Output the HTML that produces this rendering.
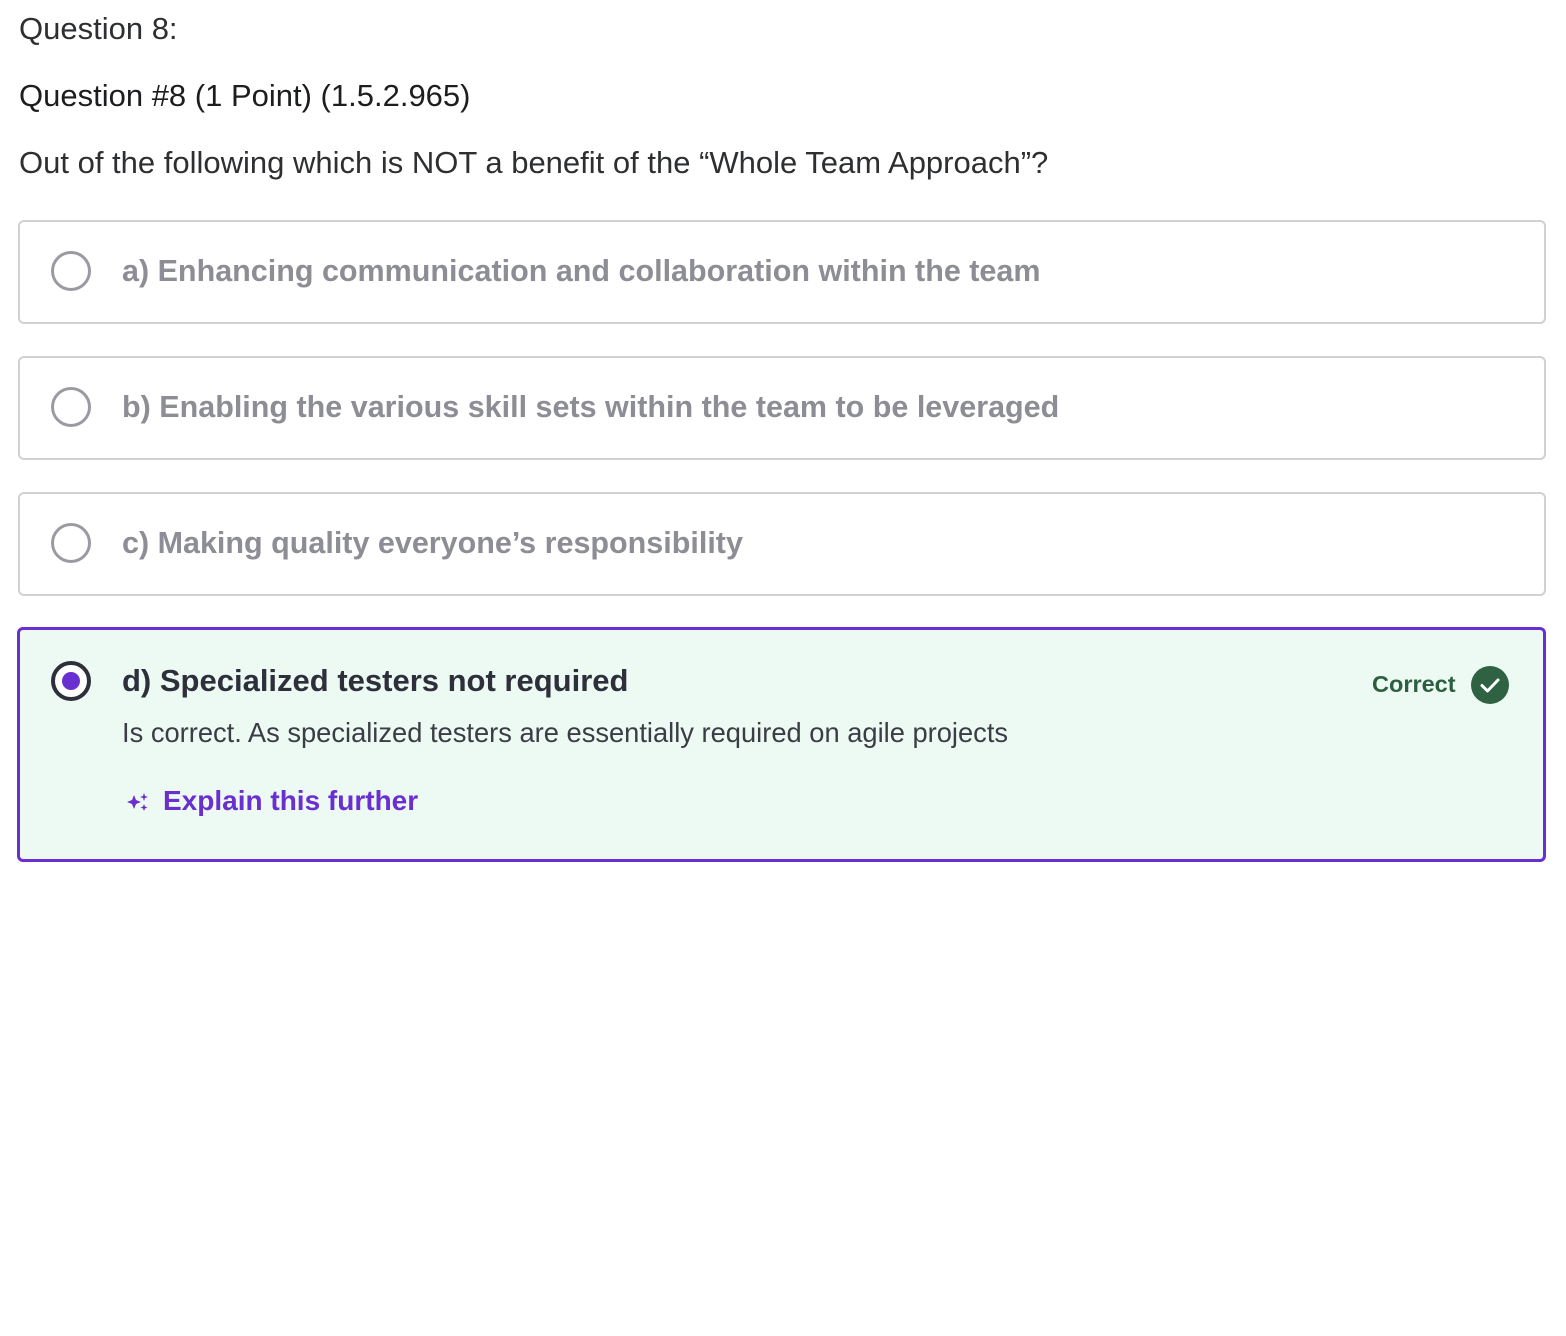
<!DOCTYPE html>
<html><head><meta charset="utf-8"><style>
body{margin:0;background:#fff;font-family:"Liberation Sans",sans-serif;color:#2d2f31;width:1566px;height:1336px;position:relative;overflow:hidden}
.t{position:absolute;left:19px;white-space:nowrap}
.box{position:absolute;left:18px;width:1524px;border:2px solid #d1d1d5;border-radius:6px;background:#fff}
.opt{height:100px}
.radio{position:absolute;left:31px;border:3px solid #9a9aa2;border-radius:50%;box-sizing:border-box;width:40px;height:40px}
.lbl{position:absolute;left:102px;font-size:30.5px;font-weight:bold;color:#8d8d95;white-space:nowrap}
</style></head><body>
<div class="t" style="top:11px;font-size:31px;">Question 8:</div>
<div class="t" style="top:78px;font-size:31px;color:#1c1d1f">Question #8 (1 Point) (1.5.2.965)</div>
<div class="t" style="top:145px;font-size:31px;">Out of the following which is NOT a benefit of the “Whole Team Approach”?</div>

<div class="box opt" style="top:220px"><div class="radio" style="top:29px"></div><div class="lbl" style="top:32px">a) Enhancing communication and collaboration within the team</div></div>
<div class="box opt" style="top:356px"><div class="radio" style="top:29px"></div><div class="lbl" style="top:32px">b) Enabling the various skill sets within the team to be leveraged</div></div>
<div class="box opt" style="top:492px"><div class="radio" style="top:29px"></div><div class="lbl" style="top:32px">c) Making quality everyone’s responsibility</div></div>

<div class="box" style="top:627px;height:229px;border:3px solid #6a2fd0;background:#edf9f3;width:1523px;left:17px">
 <div style="position:absolute;left:31px;top:31px;width:40px;height:40px;border:4px solid #2d2f3a;border-radius:50%;box-sizing:border-box;background:#fff"><div style="position:absolute;left:7px;top:7px;width:18px;height:18px;border-radius:50%;background:#6a2fd0"></div></div>
 <div style="position:absolute;left:102px;top:33px;font-size:31px;font-weight:bold;color:#2d2f3a;white-space:nowrap">d) Specialized testers not required</div>
 <div style="position:absolute;left:102px;top:87px;font-size:27.3px;color:#3b3d45;white-space:nowrap">Is correct. As specialized testers are essentially required on agile projects</div>
 <svg style="position:absolute;left:106px;top:160px" width="24" height="24" viewBox="0 0 24 24" fill="#6a2fd0"><path d="M8 5 L10 10 L15 12 L10 14 L8 19 L6 14 L1 12 L6 10Z"/><path d="M18 3 L19 6 L22 7 L19 8 L18 11 L17 8 L14 7 L17 6Z"/><path d="M18 14 L19 16.5 L21.5 17.5 L19 18.5 L18 21 L17 18.5 L14.5 17.5 L17 16.5Z"/></svg>
 <div style="position:absolute;left:143px;top:155px;font-size:28px;font-weight:bold;color:#6a2fd0;white-space:nowrap">Explain this further</div>
 <div style="position:absolute;left:1352px;top:41px;font-size:23.5px;font-weight:bold;color:#2b5f3f;white-space:nowrap">Correct</div>
 <svg style="position:absolute;left:1451px;top:36px" width="38" height="38" viewBox="0 0 38 38"><circle cx="19" cy="19" r="19" fill="#2e6243"/><path d="M11 19.5 L16.5 25 L27 14" stroke="#fff" stroke-width="3" fill="none" stroke-linecap="round" stroke-linejoin="round"/></svg>
</div>
</body></html>
